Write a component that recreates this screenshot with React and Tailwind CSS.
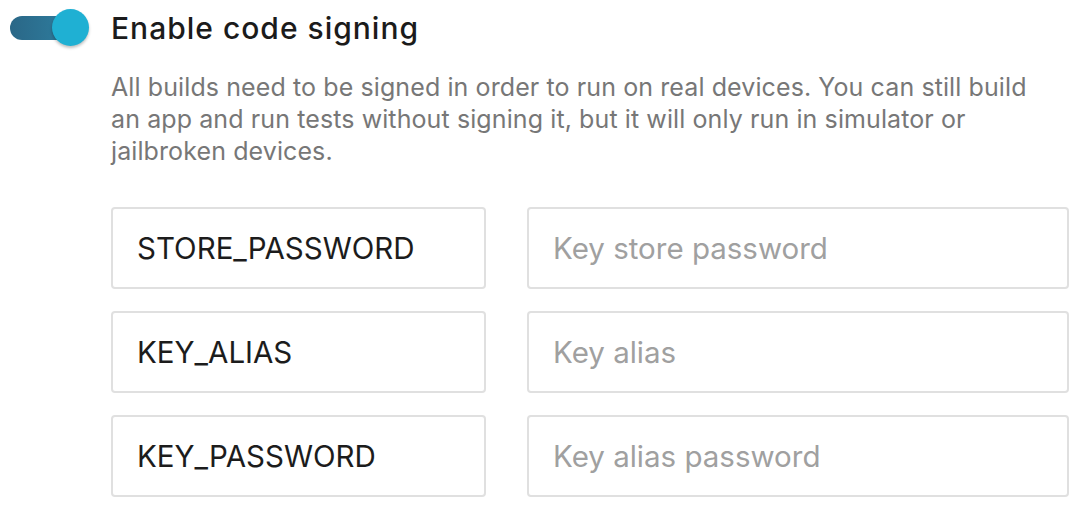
import React from "react";

const rows = [
  ["STORE_PASSWORD", "Key store password"],
  ["KEY_ALIAS", "Key alias"],
  ["KEY_PASSWORD", "Key alias password"],
];

export default function App() {
  return (
    <div
      className="w-[1086px] h-[516px] bg-white flex overflow-hidden"
      style={{ fontFamily: "Inter, 'Noto Sans', sans-serif" }}
    >
      <div className="w-[111px] shrink-0 pl-[10px] pt-[9px]">
        <div className="relative w-[78px] h-[37px]">
          <div className="absolute left-0 top-[7px] w-[72px] h-[24px] rounded-full bg-gradient-to-r from-[#2a6787] to-[#2f82a3]" />
          <div className="absolute left-[42px] top-0 w-[37px] h-[37px] rounded-full bg-[#1fb0d3] shadow-[0_2px_3px_rgba(0,0,0,0.25)]" />
        </div>
      </div>
      <div className="flex-1 pr-[17px] pt-[10px]">
        <h1 className="text-[30px] leading-[36px] font-medium tracking-[1px] text-[#1b1b1b]">
          Enable code signing
        </h1>
        <p className="mt-[25px] max-w-[930px] text-[25px] leading-[32px] tracking-[0.1px] text-[#777777]">
          All builds need to be signed in order to run on real devices. You can
          still build an app and run tests without signing it, but it will only
          run in simulator or jailbroken devices.
        </p>
        <div className="mt-[40px] grid grid-cols-[375px_1fr] gap-x-[41px] gap-y-[22px]">
          {rows.map(([k, p]) => (
            <React.Fragment key={k}>
              <div className="h-[82px] border-2 border-[#e0e0e0] rounded-[4px] flex items-center pl-[24px] text-[29.5px] text-[#1c1c1c]">
                {k}
              </div>
              <div className="h-[82px] border-2 border-[#e0e0e0] rounded-[4px] flex items-center pl-[24px] text-[29.5px] text-[#a0a0a0]">
                {p}
              </div>
            </React.Fragment>
          ))}
        </div>
      </div>
    </div>
  );
}
